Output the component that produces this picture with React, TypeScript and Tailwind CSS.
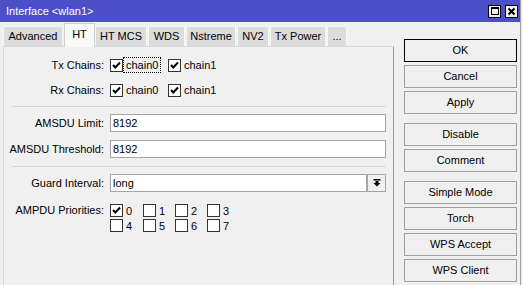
import React from 'react'

const TABS = [
  { label: 'Advanced', w: 'w-[60px]', ml: 'ml-0' },
  { label: 'HT', w: 'w-[31px]', ml: 'ml-[1px]', active: true },
  { label: 'HT MCS', w: 'w-[52px]', ml: 'ml-0' },
  { label: 'WDS', w: 'w-[37px]', ml: 'ml-px' },
  { label: 'Nstreme', w: 'w-[50px]', ml: 'ml-px' },
  { label: 'NV2', w: 'w-[32px]', ml: 'ml-px' },
  { label: 'Tx Power', w: 'w-[56px]', ml: 'ml-px' },
  { label: '...', w: 'w-[20px]', ml: 'ml-px' },
]

const BUTTONS: { label: string; gap: string; primary?: boolean }[] = [
  { label: 'OK', gap: 'mt-0', primary: true },
  { label: 'Cancel', gap: 'mt-[3px]' },
  { label: 'Apply', gap: 'mt-[3px]' },
  { label: 'Disable', gap: 'mt-[9px]' },
  { label: 'Comment', gap: 'mt-[3px]' },
  { label: 'Simple Mode', gap: 'mt-[9px]' },
  { label: 'Torch', gap: 'mt-[3px]' },
  { label: 'WPS Accept', gap: 'mt-[3px]' },
  { label: 'WPS Client', gap: 'mt-[3px]' },
]

function Box({ checked }: { checked?: boolean }) {
  return (
    <span className="flex h-[13px] w-[13px] shrink-0 items-center justify-center border border-[#333333] bg-white">
      {checked && (
        <svg width="11" height="11" viewBox="0 0 11 11" aria-hidden>
          <path d="M2 5 L4.3 7.5 L9 2.5" fill="none" stroke="#000" strokeWidth="2" />
        </svg>
      )}
    </span>
  )
}

function Check({
  label,
  checked,
  focused,
  w,
}: {
  label: string
  checked?: boolean
  focused?: boolean
  w: string
}) {
  return (
    <div className={`flex shrink-0 items-center ${w}`}>
      <Box checked={checked} />
      <span
        className={`border border-dotted px-[2px] leading-[14px] ${
          focused ? 'border-black' : 'border-transparent'
        }`}
      >
        {label}
      </span>
    </div>
  )
}

function Label({ children }: { children: React.ReactNode }) {
  return <span className="w-[100px] shrink-0 text-right">{children}</span>
}

function Separator() {
  return <div className="ml-[8px] mt-[8px] h-px w-[374px] bg-[#d5d5d5]" />
}

function TextField({ value, className }: { value: string; className: string }) {
  return (
    <div
      className={`flex h-[18px] items-center border border-[#a5a5a5] bg-white pl-[2px] ${className}`}
    >
      {value}
    </div>
  )
}

export default function App() {
  return (
    <div className="h-[285px] w-[523px] overflow-hidden bg-[#f0f0f0] font-['Liberation_Sans',Arial,sans-serif] text-[11px] text-black">
      <div className="flex h-full w-[521px] flex-col border-r border-[#a0a0a0]">
        {/* title bar */}
        <div className="flex h-[22px] shrink-0 items-center bg-[#4b4fc8] pl-[6px] pr-[2px]">
          <span className="text-white">Interface &lt;wlan1&gt;</span>
          <div className="ml-auto flex gap-[4px]">
            <span className="flex h-[13px] w-[13px] items-center justify-center border border-black bg-[#f0f0f0]">
              <span className="h-[8px] w-[8px] border border-t-2 border-black" />
            </span>
            <span className="flex h-[13px] w-[13px] items-center justify-center border border-black bg-[#f0f0f0]">
              <svg width="9" height="9" viewBox="0 0 9 9" aria-hidden>
                <path d="M1.5 1.5 L7.5 7.5 M7.5 1.5 L1.5 7.5" stroke="#000" strokeWidth="2" />
              </svg>
            </span>
          </div>
        </div>

        <div className="flex flex-1">
          {/* tabs and panel */}
          <div className="ml-[3px] flex w-[391px] flex-col">
            <div className="flex h-[24px] shrink-0 items-end">
              {TABS.map((t) =>
                t.active ? (
                  <div
                    key={t.label}
                    className={`relative z-10 -mb-px flex h-[24px] items-center justify-center border border-b-0 border-[#d0d0d0] bg-[#f9f9f9] pb-[2px] ${t.w} ${t.ml}`}
                  >
                    {t.label}
                  </div>
                ) : (
                  <div
                    key={t.label}
                    className={`flex h-[20px] items-center justify-center border border-b-0 border-[#f7f7f7] bg-[#dcdcdc] ${t.w} ${t.ml}`}
                  >
                    {t.label}
                  </div>
                ),
              )}
            </div>

            <div className="flex flex-1 flex-col border-l border-r border-t border-l-[#d8d8d8] border-r-[#9a9a9a] border-t-[#d8d8d8]">
              <div className="mt-[10px] flex h-[16px] items-center">
                <Label>Tx Chains:</Label>
                <div className="ml-[6px] flex">
                  <Check label="chain0" checked focused w="w-[58px]" />
                  <Check label="chain1" checked w="w-[58px]" />
                </div>
              </div>
              <div className="mt-[9px] flex h-[16px] items-center">
                <Label>Rx Chains:</Label>
                <div className="ml-[6px] flex">
                  <Check label="chain0" checked w="w-[58px]" />
                  <Check label="chain1" checked w="w-[58px]" />
                </div>
              </div>

              <Separator />

              <div className="mt-[7px] flex items-center gap-[6px]">
                <Label>AMSDU Limit:</Label>
                <TextField value="8192" className="w-[276px]" />
              </div>
              <div className="mt-[8px] flex items-center gap-[6px]">
                <Label>AMSDU Threshold:</Label>
                <TextField value="8192" className="w-[276px]" />
              </div>

              <Separator />

              <div className="mt-[7px] flex items-center gap-[6px]">
                <Label>Guard Interval:</Label>
                <div className="flex">
                  <TextField value="long" className="w-[257px]" />
                  <div className="flex h-[18px] w-[19px] items-center justify-center border border-[#a5a5a5] bg-[#f0f0f0]">
                    <svg width="8" height="8" viewBox="0 0 8 8" aria-hidden>
                      <rect x="0.5" y="0" width="7" height="1.5" fill="#000" />
                      <rect x="2.5" y="2" width="3" height="2" fill="#000" />
                      <path d="M0.5 4 L7.5 4 L4 7.5 Z" fill="#000" />
                    </svg>
                  </div>
                </div>
              </div>

              <div className="mt-[12px] flex h-[13px] items-center">
                <Label>AMPDU Priorities:</Label>
                <div className="ml-[6px] flex">
                  <Check label="0" checked w="w-[33px]" />
                  <Check label="1" w="w-[32px]" />
                  <Check label="2" w="w-[32px]" />
                  <Check label="3" w="w-[32px]" />
                </div>
              </div>
              <div className="mt-[2px] flex h-[13px] items-center">
                <span className="w-[100px] shrink-0" />
                <div className="ml-[6px] flex">
                  <Check label="4" w="w-[33px]" />
                  <Check label="5" w="w-[32px]" />
                  <Check label="6" w="w-[32px]" />
                  <Check label="7" w="w-[32px]" />
                </div>
              </div>
            </div>
          </div>

          {/* action buttons */}
          <div className="ml-[10px] flex w-[113px] flex-col pt-[17px]">
            {BUTTONS.map((b) => (
              <div
                key={b.label}
                className={`flex h-[23px] shrink-0 items-center justify-center border bg-[#f0f0f0] ${
                  b.primary ? 'border-black' : 'border-[#a0a0a0]'
                } ${b.gap}`}
              >
                {b.label}
              </div>
            ))}
          </div>
        </div>
      </div>
    </div>
  )
}
